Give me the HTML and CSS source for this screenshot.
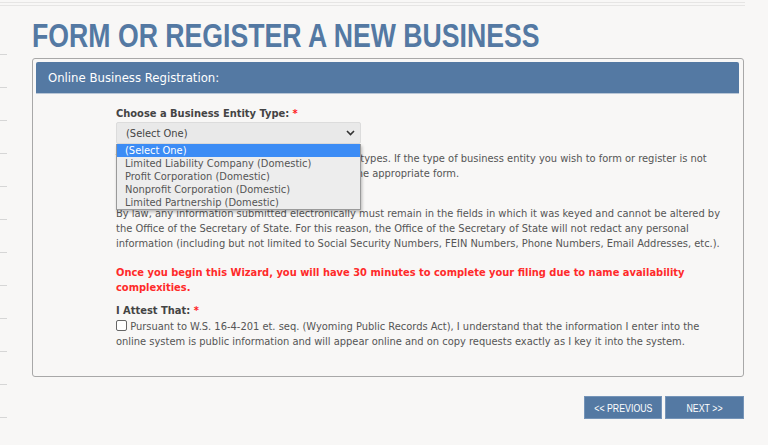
FILE: index.html
```html
<!DOCTYPE html>
<html>
<head>
<meta charset="utf-8">
<link rel="stylesheet" href="styles.css">
</head>
<body>
<div class="topline"></div>
<div class="page">
  <div class="gutter"></div>
  <main class="main">
    <h1 class="title"><span class="narrow">FORM OR REGISTER A NEW BUSINESS</span></h1>
    <section class="panel">
      <div class="panel-head">Online Business Registration:</div>
      <div class="panel-body">
        <div class="label">Choose a Business Entity Type: <span class="req">*</span></div>
        <div class="select-wrap">
          <div class="select">
            <span>(Select One)</span>
            <svg class="chev" width="9" height="6" viewBox="0 0 9 6"><path d="M1 1 L4.5 4.5 L8 1" fill="none" stroke="#333" stroke-width="1.6"/></svg>
          </div>
          <ul class="dropdown">
            <li class="sel">(Select One)</li>
            <li>Limited Liability Company (Domestic)</li>
            <li>Profit Corporation (Domestic)</li>
            <li>Nonprofit Corporation (Domestic)</li>
            <li>Limited Partnership (Domestic)</li>
          </ul>
        </div>
        <p class="txt intro">This online wizard is used for the business entity types. If the type of business entity you wish to form or register is not<br>listed, please visit the Forms page to download the appropriate form.</p>
        <p class="txt">By law, any information submitted electronically must remain in the fields in which it was keyed and cannot be altered by<br>the Office of the Secretary of State. For this reason, the Office of the Secretary of State will not redact any personal<br>information (including but not limited to Social Security Numbers, FEIN Numbers, Phone Numbers, Email Addresses, etc.).</p>
        <p class="warn">Once you begin this Wizard, you will have 30 minutes to complete your filing due to name availability<br>complexities.</p>
        <div class="label attest">I Attest That: <span class="req">*</span></div>
        <p class="txt check"><span class="box"></span> Pursuant to W.S. 16-4-201 et. seq. (Wyoming Public Records Act), I understand that the information I enter into the<br>online system is public information and will appear online and on copy requests exactly as I key it into the system.</p>
      </div>
    </section>
    <div class="nav">
      <button class="btn prev"><span class="btxt">&lt;&lt; PREVIOUS</span></button>
      <button class="btn next"><span class="btxt">NEXT &gt;&gt;</span></button>
    </div>
  </main>
</div>
</body>
</html>
```
FILE: styles.css
```css
html, body {
  margin: 0;
  padding: 0;
  background: #f8f7f6;
}
body {
  font-family: "DejaVu Sans Condensed", "DejaVu Sans", sans-serif;
  color: #555;
  width: 768px;
  height: 445px;
  overflow: hidden;
}
.topline {
  width: 745px;
  height: 2px;
  margin-top: 2px;
  border-top: 1px solid #e6e5e4;
  border-bottom: 1px solid #e6e5e4;
}
.page {
  display: flex;
}
.gutter {
  width: 7px;
  height: 380px;
  margin-top: 48px;
  background: repeating-linear-gradient(to bottom, #d6d6d6 0 1px, transparent 1px 33px);
}
.main {
  margin-left: 25px;
  width: 712px;
}
.title {
  margin: 13px 0 0;
  font-family: "Liberation Sans", Arial, sans-serif;
  font-weight: bold;
  font-size: 33px;
  line-height: 33px;
  height: 33px;
  color: #5479a3;
  white-space: nowrap;
}
.narrow {
  display: inline-block;
  transform: scaleX(0.808);
  transform-origin: 0 0;
}
.panel {
  margin-top: 6px;
  border: 1px solid #a8a8a8;
  border-radius: 3px;
  padding: 3px 4px 0 3px;
  box-sizing: border-box;
  height: 319px;
}
.panel-head {
  height: 32px;
  box-sizing: border-box;
  background: #5479a3;
  border-bottom: 1px solid #b9c6d6;
  border-radius: 2px 2px 0 0;
  color: #fff;
  font-size: 13px;
  line-height: 31px;
  padding-left: 12px;
}
.panel-body {
  padding: 12px 0 0 80px;
  font-size: 11px;
  line-height: 15px;
}
.label {
  font-weight: bold;
  color: #444;
}
.req {
  color: #f22;
}
.select-wrap {
  position: relative;
  width: 245px;
  margin-top: 1px;
}
.select {
  height: 22px;
  box-sizing: border-box;
  background: #e9e9e9;
  border: 1px solid #dcdcdc;
  border-radius: 2px;
  display: flex;
  align-items: center;
  justify-content: space-between;
  padding: 0 5px 0 9px;
  color: #444;
}
.dropdown {
  position: absolute;
  top: 22px;
  left: 0;
  width: 245px;
  box-sizing: border-box;
  margin: 0;
  padding: 0;
  list-style: none;
  background: #ededed;
  border: 1px solid #9a9a9a;
  border-top: 0;
  box-shadow: 1px 2px 3px rgba(0,0,0,0.25);
  color: #555;
}
.dropdown li {
  height: 13px;
  line-height: 13px;
  padding-left: 8px;
  white-space: nowrap;
}
.dropdown li.sel {
  background: #3c8cf5;
  color: #fff;
}
.txt {
  margin: 0;
  white-space: nowrap;
}
.intro {
  margin-top: 7px;
}
.intro + .txt {
  margin-top: 25px;
}
.warn {
  margin: 14px 0 0;
  color: #ff2a2a;
  font-weight: bold;
  white-space: nowrap;
}
.attest {
  margin-top: 8px;
}
.check {
  margin-top: 1px;
}
.box {
  display: inline-block;
  width: 9px;
  height: 9px;
  border: 1px solid #666;
  border-radius: 2px;
  background: #fff;
  vertical-align: -1px;
}
.nav {
  display: flex;
  justify-content: flex-end;
  gap: 3px;
  margin-top: 19px;
}
.btn {
  height: 23px;
  box-sizing: border-box;
  background: #5479a3;
  border: 1px solid #7594b8;
  color: #fff;
  font-family: "Liberation Sans", Arial, sans-serif;
  font-size: 11px;
  padding: 0;
  cursor: pointer;
  display: flex;
  align-items: center;
  justify-content: center;
}
.btxt {
  display: inline-block;
  transform: scaleX(0.8);
  white-space: nowrap;
}
.prev { width: 78px; }
.next { width: 79px; }
```
